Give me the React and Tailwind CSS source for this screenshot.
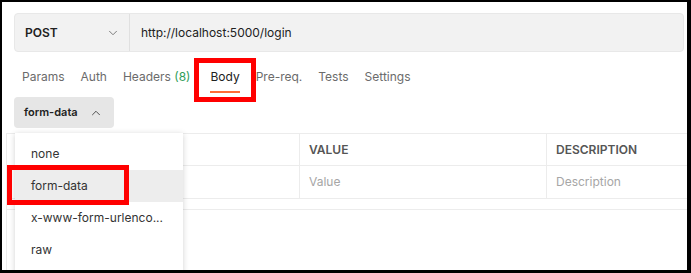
import { ChevronDown, ChevronUp } from "lucide-react";

const tabs = [
  { label: "Params" },
  { label: "Auth" },
  { label: "Headers", count: "(8)" },
  { label: "Body", active: true },
  { label: "Pre-req." },
  { label: "Tests" },
  { label: "Settings" },
];

const bodyTypes = ["none", "form-data", "x-www-form-urlenco...", "raw"];

export default function App() {
  return (
    <div
      className="relative w-[691px] h-[273px] overflow-hidden bg-white border-l-2 border-t-2 border-r-[4px] border-b-[3px] border-black"
      style={{ fontFamily: "Inter, 'Noto Sans', sans-serif" }}
    >
      {/* Request bar */}
      <div className="ml-[12px] mr-[3px] mt-[11px] h-[39px] flex rounded-[4px] border border-[#e8e8e8] bg-[#f2f2f2]">
        <div className="w-[115px] flex items-center justify-between pl-[10px] pr-[9px] border-r border-[#e0e0e0]">
          <span className="text-[12px] font-semibold text-[#212121]">POST</span>
          <ChevronDown size={14} strokeWidth={1.5} className="text-[#6b6b6b]" />
        </div>
        <div className="flex items-center pl-[11px] text-[12px] text-[#212121]">
          http://localhost:5000/login
        </div>
      </div>

      {/* Tabs */}
      <div className="mt-[8px] ml-[20px] flex gap-[16px] text-[12px] text-[#6b6b6b]">
        {tabs.map((t) => (
          <div key={t.label} className={`flex flex-col pt-[7px] ${t.active ? "ml-[4px]" : ""}`}>
            <span className={`leading-[20px] ${t.active ? "text-[#212121]" : ""}`}>
              {t.label}
              {t.count && <span className="text-[#2f9e5a]"> {t.count}</span>}
            </span>
            <div className={`mt-[4px] h-[2px] ${t.active ? "bg-[#ff6c37]" : "bg-transparent"}`} />
          </div>
        ))}
      </div>

      {/* Body type button */}
      <div className="mt-[4px] ml-[12px] w-[100px] h-[31px] flex items-center justify-between pl-[10px] pr-[11px] rounded-[4px] bg-[#e6e6e6]">
        <span className="text-[11px] font-semibold text-[#212121]">form-data</span>
        <ChevronUp size={14} strokeWidth={1.5} className="text-[#3a3a3a]" />
      </div>

      {/* Params table */}
      <div className="mt-[5px] ml-[4px] border-l border-[#ececec] h-full">
        <div className="grid grid-cols-[292px_247px_1fr] h-[33px] border-t border-b border-[#ececec] text-[12px] font-semibold text-[#555]">
          <div />
          <div className="flex items-center pl-[9px] border-l border-[#ececec]">VALUE</div>
          <div className="flex items-center pl-[9px] border-l border-[#ececec]">DESCRIPTION</div>
        </div>
        <div className="grid grid-cols-[292px_247px_1fr] h-[33px] border-b border-[#ececec] text-[12px] text-[#a6a6a6]">
          <div />
          <div className="flex items-center pl-[9px] border-l border-[#ececec]">Value</div>
          <div className="flex items-center pl-[9px] border-l border-[#ececec]">Description</div>
        </div>
        <div className="h-[11px] border-b border-[#ececec]" />
      </div>

      {/* Dropdown menu */}
      <div className="absolute left-[13px] top-[131px] w-[168px] h-[140px] bg-white pt-[5px] shadow-[0_1px_6px_rgba(0,0,0,0.18)]">
        {bodyTypes.map((b) => (
          <div
            key={b}
            className={`h-[32px] flex items-center pl-[16px] text-[12px] text-[#333] ${b === "form-data" ? "bg-[#ededed]" : ""}`}
          >
            {b}
          </div>
        ))}
      </div>

      {/* Annotation boxes */}
      <div className="absolute left-[192px] top-[56px] w-[62px] h-[44px] border-[5px] border-[#ff0000]" />
      <div className="absolute left-[5px] top-[163px] w-[122px] h-[40px] border-[5px] border-[#ff0000]" />
    </div>
  );
}
